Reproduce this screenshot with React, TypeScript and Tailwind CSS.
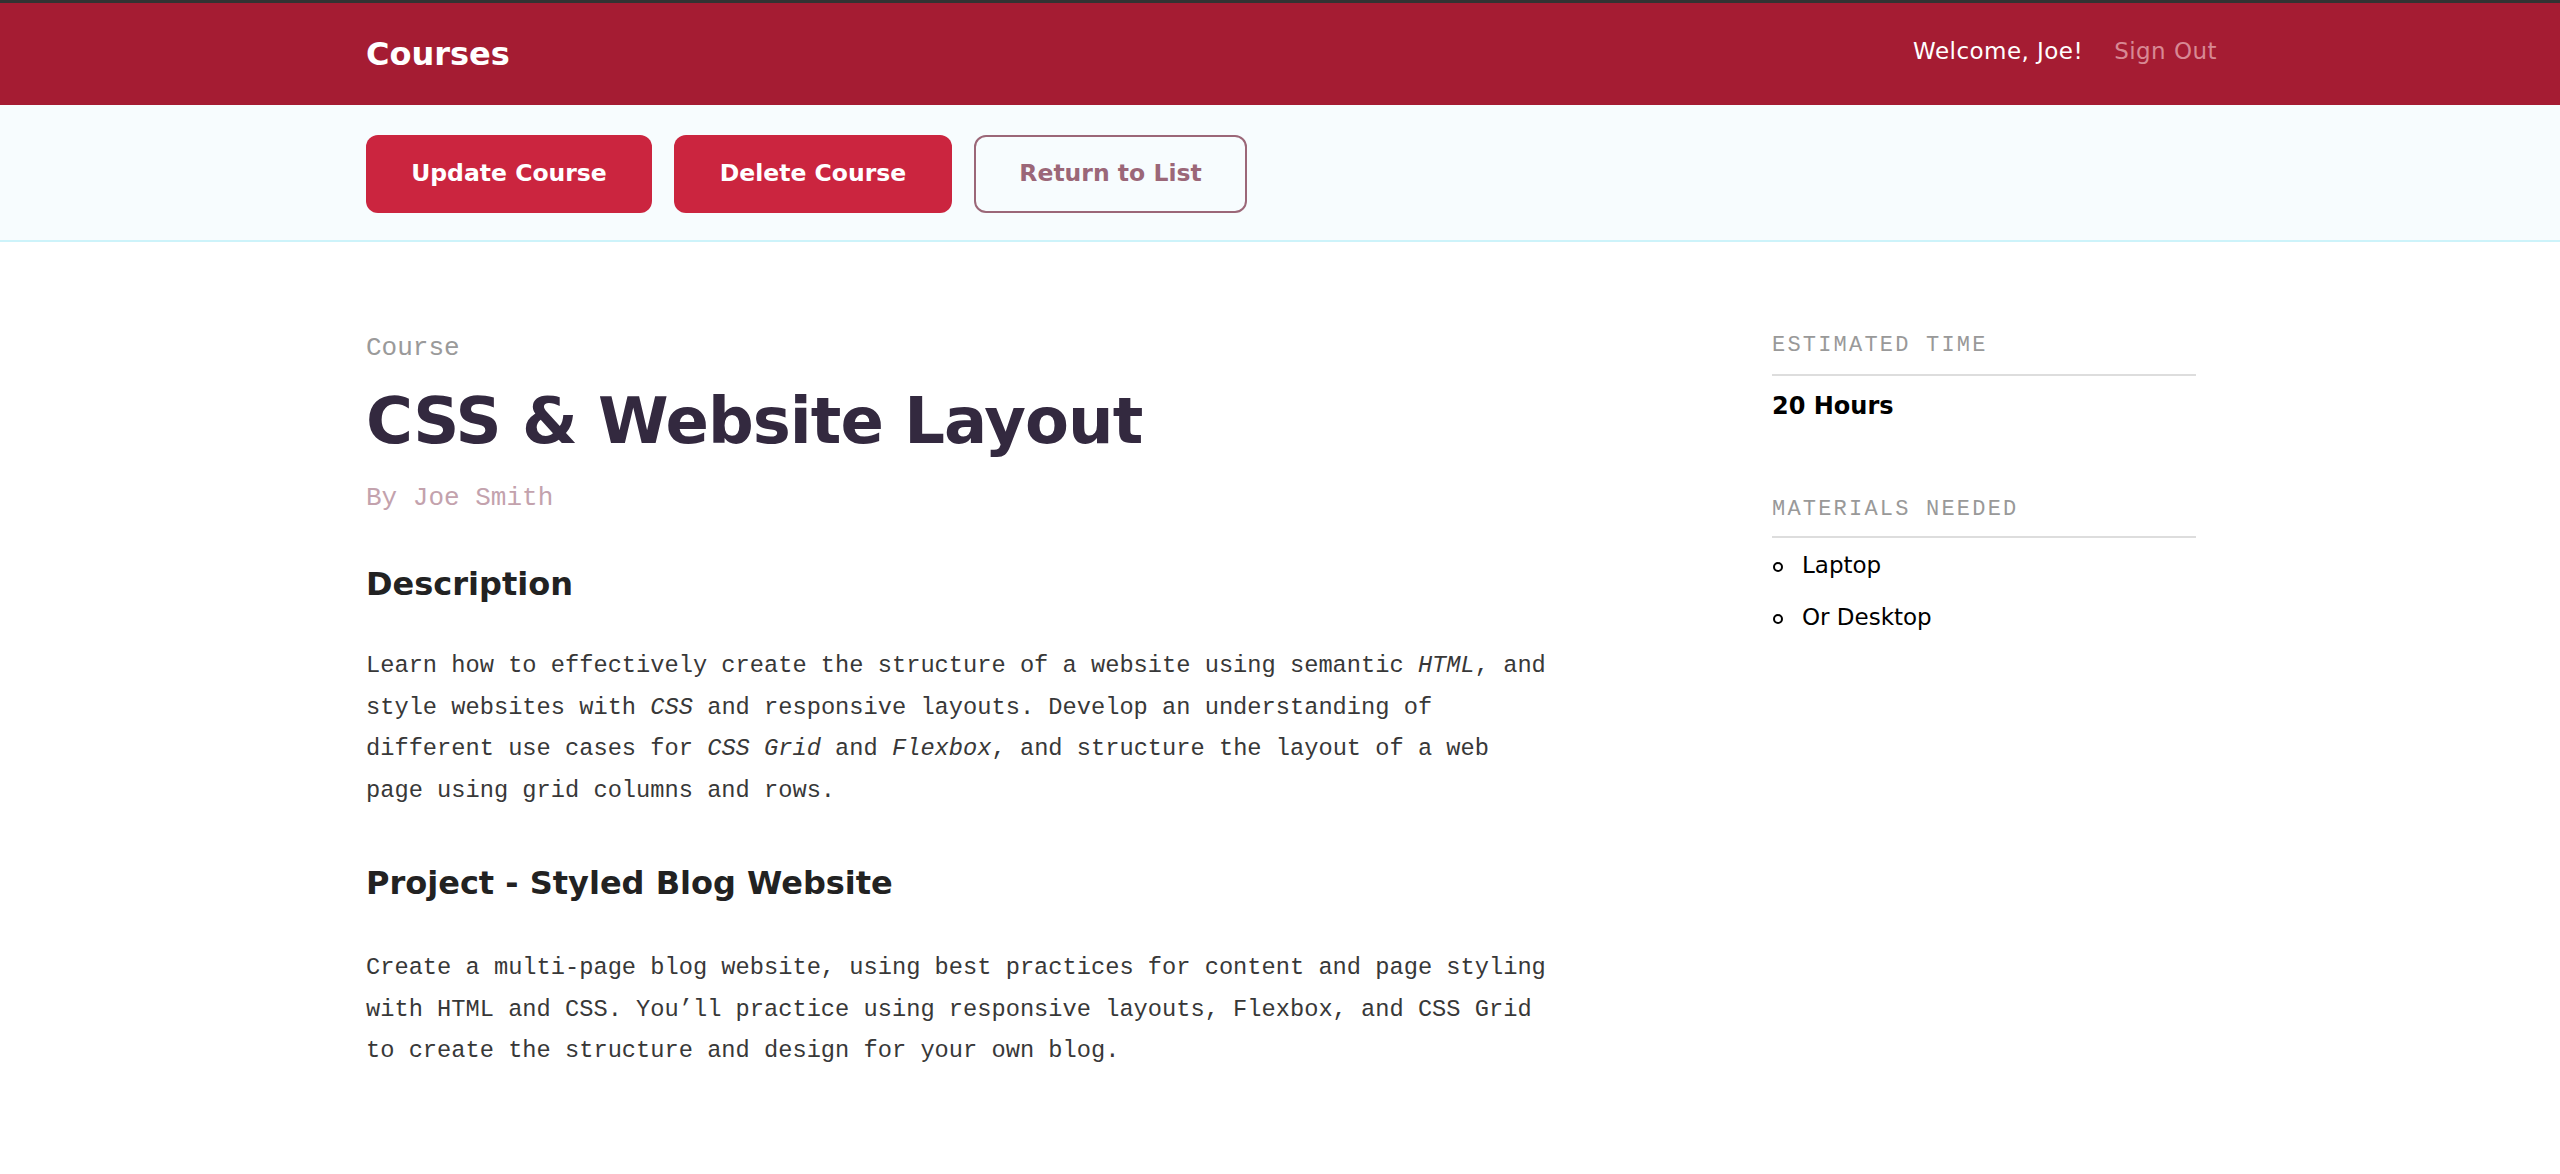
const sans = "font-['DejaVu_Sans',sans-serif]";
const mono = "font-['Liberation_Mono',monospace]";

function Header() {
  return (
    <header className="h-[105px] border-t-[3px] border-[#333] bg-[#a51c33]">
      <div className="ml-[366px] flex h-full w-[1851px] items-center justify-between">
        <h1 className={`${sans} text-[32px] font-bold leading-none text-white`}>Courses</h1>
        <nav className={`${sans} flex items-center gap-[31px] pb-[5px] text-[23px] leading-none tracking-[0.02em]`}>
          <span className="text-white">Welcome, Joe!</span>
          <a href="#" className="text-[#d88894]">
            Sign Out
          </a>
        </nav>
      </div>
    </header>
  );
}

function ActionBar() {
  const solid =
    "flex h-[78px] items-center justify-center rounded-[12px] bg-[#cb253f] text-white";
  return (
    <div className="border-b-2 border-[#cdf3fa] bg-[#f7fcfe]">
      <div className={`${sans} ml-[366px] flex gap-[22px] pt-[30px] pb-[27px] text-[23.5px] font-bold leading-none`}>
        <a href="#" className={`${solid} w-[286px]`}>
          Update Course
        </a>
        <a href="#" className={`${solid} w-[278px]`}>
          Delete Course
        </a>
        <a
          href="#"
          className="flex h-[78px] w-[273px] items-center justify-center rounded-[12px] border-2 border-[#9b6778] text-[#9b6778]"
        >
          Return to List
        </a>
      </div>
    </div>
  );
}

function CourseBody() {
  return (
    <div className="w-[1188px] pt-[93px]">
      <p className={`${mono} text-[26px] leading-none text-[#9a9a9a]`}>Course</p>
      <h2 className={`${sans} mt-[28px] text-[64px] font-bold leading-none tracking-[-0.015em] text-[#33293f]`}>
        CSS &amp; Website Layout
      </h2>
      <p className={`${mono} mt-[32px] text-[26px] leading-none text-[#c3a2ad]`}>By Joe Smith</p>

      <h3 className={`${sans} mt-[57px] text-[32px] font-bold leading-none text-[#222]`}>Description</h3>
      <p className={`${mono} mt-[45px] text-[23.7px] leading-[41.7px] text-[#383838]`}>
        Learn how to effectively create the structure of a website using semantic <em>HTML</em>, and style
        websites with <em>CSS</em> and responsive layouts. Develop an understanding of different use cases for{" "}
        <em>CSS Grid</em> and <em>Flexbox</em>, and structure the layout of a web page using grid columns and
        rows.
      </p>

      <h3 className={`${sans} mt-[55px] text-[32px] font-bold leading-none text-[#222]`}>
        Project - Styled Blog Website
      </h3>
      <p className={`${mono} mt-[48px] text-[23.7px] leading-[41.7px] text-[#383838]`}>
        Create a multi-page blog website, using best practices for content and page styling with HTML and CSS.
        You’ll practice using responsive layouts, Flexbox, and CSS Grid to create the structure and design for
        your own blog.
      </p>
    </div>
  );
}

function Sidebar() {
  const label = `${mono} border-b-2 border-[#ddd] text-[22px] uppercase leading-none tracking-[0.1em] text-[#999]`;
  return (
    <aside className="ml-[218px] w-[424px] pt-[93px]">
      <h4 className={`${label} pb-[17px]`}>Estimated Time</h4>
      <p className={`${sans} mt-[18px] text-[24px] font-bold leading-none text-black`}>20 Hours</p>

      <h4 className={`${label} mt-[81px] pb-[15px]`}>Materials Needed</h4>
      <ul className={`${sans} mt-[16px] flex flex-col gap-[28.5px] text-[23px] leading-none text-black`}>
        {["Laptop", "Or Desktop"].map((item) => (
          <li key={item} className="flex items-center gap-[19px]">
            <span className="mt-[3px] ml-px h-[10px] w-[10px] shrink-0 rounded-full border-2 border-black" />
            {item}
          </li>
        ))}
      </ul>
    </aside>
  );
}

export default function App() {
  return (
    <div className="min-h-screen bg-white">
      <Header />
      <ActionBar />
      <main className="ml-[366px] flex items-start">
        <CourseBody />
        <Sidebar />
      </main>
    </div>
  );
}
